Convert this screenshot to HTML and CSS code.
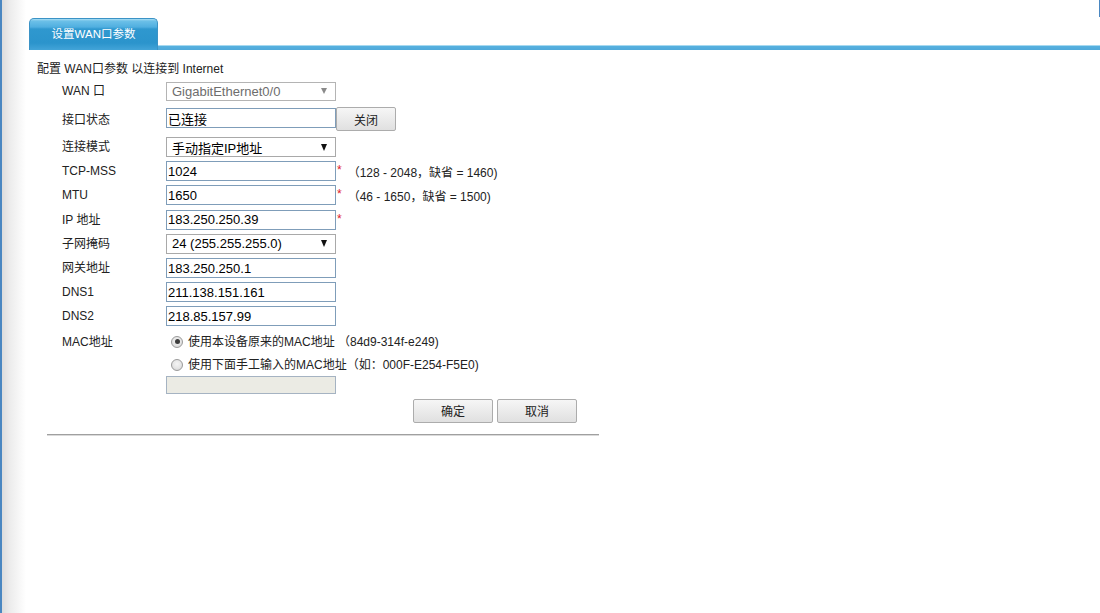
FILE: index.html
```html
<!DOCTYPE html>
<html lang="zh-CN">
<head>
<meta charset="utf-8">
<title>设置WAN口参数</title>
<link rel="stylesheet" href="styles.css">
</head>
<body>
<div class="page">
  <div class="tabbar">
    <div class="tab">设置WAN口参数</div>
    <div class="tabline"></div>
  </div>
  <div class="content">
    <div class="desc">配置 WAN口参数 以连接到 Internet</div>
    <div class="form">
      <div class="label">WAN 口</div>
      <div class="field"><div class="select disabled"><span>GigabitEthernet0/0</span><i class="arrow"></i></div></div>

      <div class="label">接口状态</div>
      <div class="field field-top"><input class="text text-offset" type="text" value="已连接"><button class="btn btn-close">关闭</button></div>

      <div class="label">连接模式</div>
      <div class="field"><div class="select"><span>手动指定IP地址</span><i class="arrow"></i></div></div>

      <div class="label">TCP-MSS</div>
      <div class="field"><input class="text" type="text" value="1024"><span class="req">*</span><span class="hint">（128 - 2048，缺省 = 1460)</span></div>

      <div class="label">MTU</div>
      <div class="field"><input class="text" type="text" value="1650"><span class="req">*</span><span class="hint">（46 - 1650，缺省 = 1500)</span></div>

      <div class="label">IP 地址</div>
      <div class="field"><input class="text" type="text" value="183.250.250.39"><span class="req">*</span></div>

      <div class="label">子网掩码</div>
      <div class="field"><div class="select"><span>24 (255.255.255.0)</span><i class="arrow"></i></div></div>

      <div class="label">网关地址</div>
      <div class="field"><input class="text" type="text" value="183.250.250.1"></div>

      <div class="label">DNS1</div>
      <div class="field"><input class="text" type="text" value="211.138.151.161"></div>

      <div class="label">DNS2</div>
      <div class="field"><input class="text" type="text" value="218.85.157.99"></div>

      <div class="label">MAC地址</div>
      <div class="field"><span class="radio checked"></span><span class="radio-text">使用本设备原来的MAC地址 （84d9-314f-e249)</span></div>

      <div class="label"></div>
      <div class="field"><span class="radio"></span><span class="radio-text">使用下面手工输入的MAC地址（如：000F-E254-F5E0)</span></div>

      <div class="label"></div>
      <div class="field"><input class="text mac" type="text" value="" disabled></div>

      <div class="label"></div>
      <div class="field field-buttons"><button class="btn btn-main">确定</button><button class="btn btn-main">取消</button></div>
    </div>
    <div class="rule"></div>
  </div>
</div>
</body>
</html>
```

FILE: styles.css
```css
html, body {
  margin: 0;
  padding: 0;
}

body {
  font-family: "Liberation Sans", Arial, "Noto Sans CJK SC", sans-serif;
  font-size: 12px;
  color: #222;
  background-color: #fff;
}

.page {
  min-height: 613px;
  background:
    linear-gradient(#4a87c1, #4a87c1) right top / 1px 17px no-repeat,
    linear-gradient(to right, #4a87c1 0, #4a87c1 2px, #dcdcdc 2px, #ececec 10px, #ffffff 26px) left top / 26px 100% no-repeat;
}

.tabbar {
  display: flex;
  align-items: flex-end;
  padding-top: 18px;
  margin-left: 29px;
  height: 32px;
}

.tab {
  box-sizing: border-box;
  width: 129px;
  height: 32px;
  border: 1px solid #3b93c6;
  border-bottom: none;
  border-radius: 5px 5px 0 0;
  background: linear-gradient(#a9def4 0, #6cc0e8 2px, #50afe0 8px, #2f98cf 10px, #2b94cc 24px, #43a4d8 100%);
  color: #fff;
  font-size: 11.5px;
  line-height: 30px;
  text-align: center;
}

.tabline {
  flex: 1;
  height: 5px;
  background: linear-gradient(#a6d9f0 0, #a6d9f0 1.5px, #56b0df 1.5px, #4fa9da 100%);
}

.content {
  padding-left: 37px;
}

.desc {
  padding-top: 10px;
  line-height: 18px;
  height: 18px;
}

.form {
  display: grid;
  grid-template-columns: 104px 1fr;
  grid-template-rows: 26px 31px repeat(8, 24.2px) 26px 21px 18px 29px;
  margin-left: 25px;
}

.label {
  align-self: center;
  line-height: 16px;
  white-space: nowrap;
}

.field {
  display: flex;
  align-items: center;
  white-space: nowrap;
}

.field-top {
  align-items: flex-start;
  padding-top: 3px;
}

.field-buttons {
  align-items: flex-end;
  padding-left: 247px;
  gap: 4px;
}

.text {
  box-sizing: border-box;
  width: 170px;
  height: 20px;
  margin: 0;
  padding: 0 1px;
  border: 1px solid #7f9db9;
  background: #fff;
  font-family: "Liberation Sans", Arial, "Noto Sans CJK SC", sans-serif;
  font-size: 13px;
  color: #000;
  outline: none;
}

.text-offset {
  margin-top: 1px;
}

.text.mac {
  height: 18px;
  background: #ebebe4;
  border-color: #a5b3c2;
}

.select {
  box-sizing: border-box;
  width: 170px;
  height: 20px;
  display: flex;
  align-items: center;
  justify-content: space-between;
  padding: 0 8px 0 5px;
  border: 1px solid #a9a9a9;
  background: #fff;
  font-size: 13px;
  color: #000;
}

.select.disabled {
  height: 19px;
  color: #6d6d6d;
  border-color: #b4b4b4;
}

.arrow {
  width: 0;
  height: 0;
  border-left: 3.5px solid transparent;
  border-right: 3.5px solid transparent;
  border-top: 7px solid #111;
}

.select.disabled .arrow {
  border-left-width: 3px;
  border-right-width: 3px;
  border-top: 6px solid #8a8a8a;
}

.req {
  color: #e0202a;
  font-size: 12px;
  margin-left: 1px;
  align-self: flex-start;
  line-height: 14px;
  margin-top: 4px;
}

.hint {
  margin-left: 6px;
  font-size: 12px;
}

.radio {
  box-sizing: border-box;
  width: 12px;
  height: 12px;
  margin-left: 5px;
  margin-right: 5px;
  border-radius: 50%;
  border: 1px solid #9a9a9a;
  background: radial-gradient(circle at 50% 40%, #f4f4f4 0, #e6e6e6 50%, #cfcfcf 100%);
  display: flex;
  align-items: center;
  justify-content: center;
}

.radio.checked::after {
  content: "";
  width: 5px;
  height: 5px;
  border-radius: 50%;
  background: #3c3c3c;
}

.radio-text {
  font-size: 12px;
  line-height: 16px;
}

.btn {
  box-sizing: border-box;
  margin: 0;
  padding: 0;
  height: 24px;
  border: 1px solid #acacac;
  border-radius: 2px;
  background: linear-gradient(#f6f6f6, #e0e0e0);
  font-family: "Liberation Sans", Arial, "Noto Sans CJK SC", sans-serif;
  font-size: 12px;
  color: #222;
}

.btn-close {
  width: 60px;
  margin-left: 0;
}

.btn-main {
  width: 80px;
}

.rule {
  width: 552px;
  margin-left: 10px;
  margin-top: 11px;
  border-top: 1px solid #a0a0a0;
  border-bottom: 1px solid #dadada;
}
```
